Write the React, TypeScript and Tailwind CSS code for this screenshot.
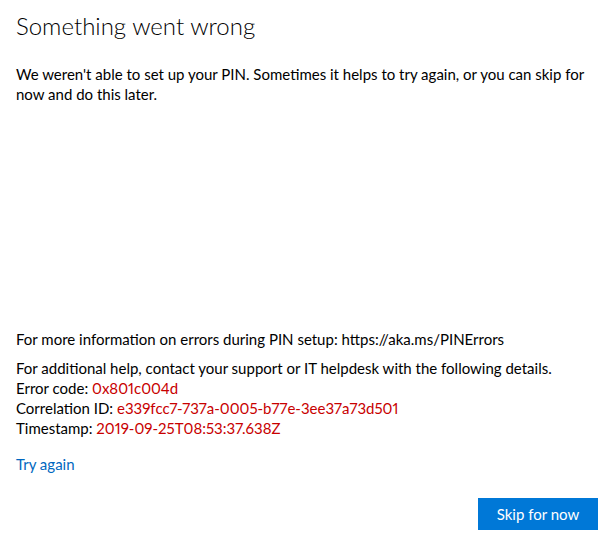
const details = [
  { label: "Error code:", value: "0x801c004d" },
  { label: "Correlation ID:", value: "e339fcc7-737a-0005-b77e-3ee37a73d501" },
  { label: "Timestamp:", value: "2019-09-25T08:53:37.638Z" },
];

export default function App() {
  return (
    <div className="flex min-h-[536px] flex-col bg-white pl-4 pr-[10px] pt-[10px] pb-[6px] font-['Lato','Noto_Sans',sans-serif] text-[15px] leading-5 text-black proportional-nums">
      <h1 className="text-[24px] font-light leading-8">Something went wrong</h1>
      <p className="mt-[22px]">
        We weren't able to set up your PIN. Sometimes it helps to try again, or you can skip for now and do this later.
      </p>

      <div className="flex-1" />

      <p>For more information on errors during PIN setup: https://aka.ms/PINErrors</p>
      <div className="mt-[9px]">
        <p>For additional help, contact your support or IT helpdesk with the following details.</p>
        {details.map((d) => (
          <p key={d.label}>
            {d.label} <span className="text-[#c80000]">{d.value}</span>
          </p>
        ))}
      </div>

      <a href="#" className="mt-4 self-start text-[#0067c0]">
        Try again
      </a>

      <div className="mt-6 flex justify-end">
        <button className="h-8 w-[120px] bg-[#0078d7] pb-px text-white">Skip for now</button>
      </div>
    </div>
  );
}
